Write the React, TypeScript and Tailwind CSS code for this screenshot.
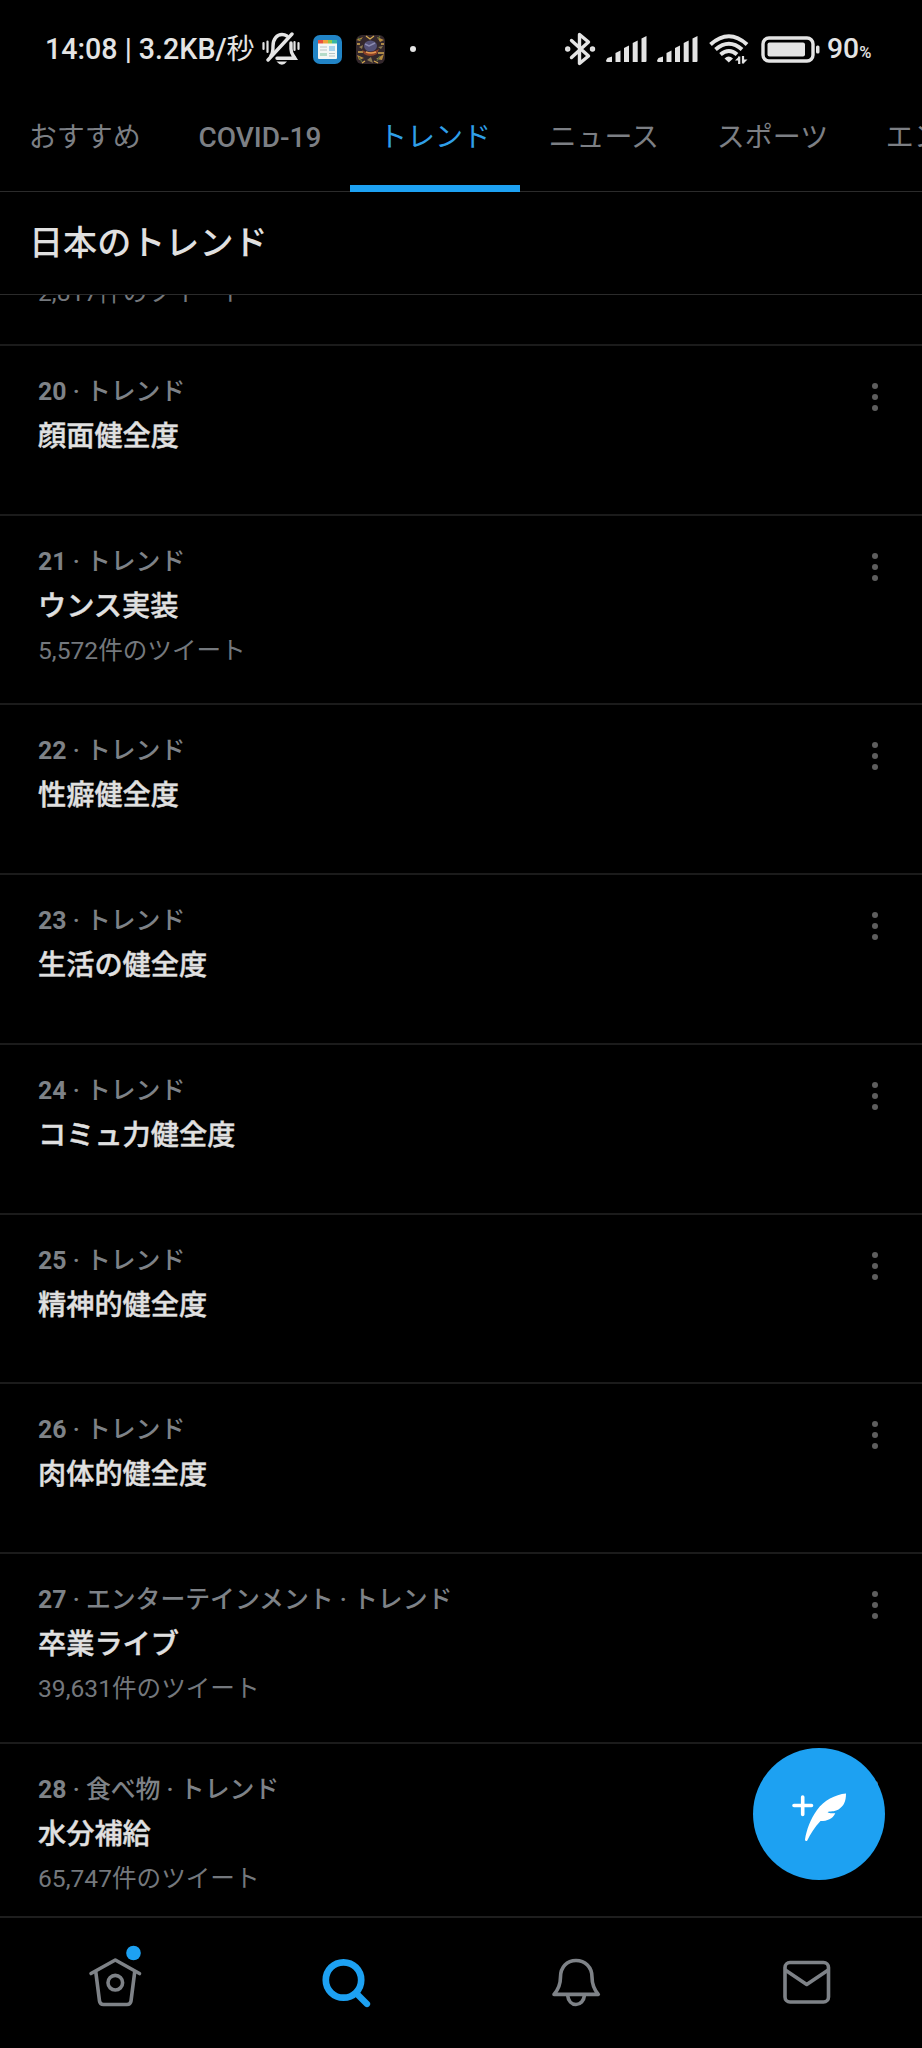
import React from "react";

const tabs = ["おすすめ", "COVID-19", "トレンド", "ニュース", "スポーツ", "エンターテインメント"];

const trends = [
  { rank: 20, category: "トレンド", title: "顔面健全度" },
  { rank: 21, category: "トレンド", title: "ウンス実装", count: "5,572" },
  { rank: 22, category: "トレンド", title: "性癖健全度" },
  { rank: 23, category: "トレンド", title: "生活の健全度" },
  { rank: 24, category: "トレンド", title: "コミュ力健全度" },
  { rank: 25, category: "トレンド", title: "精神的健全度" },
  { rank: 26, category: "トレンド", title: "肉体的健全度" },
  { rank: 27, category: "エンターテインメント · トレンド", title: "卒業ライブ", count: "39,631" },
  { rank: 28, category: "食べ物 · トレンド", title: "水分補給", count: "65,747" },
];

const Signal = () => (
  <svg className="h-[27px] w-[41px] shrink-0" viewBox="0 0 41 27" fill="#e4e4e4">
    <path d="M0 24.500L1.500 22L6 20.500V26H1.500Q0 26 0 24.500Z" />
    <path d="M9.500 17L14.500 14.500V26H9.500Z" />
    <path d="M18 12L23 9.500V26H18Z" />
    <path d="M26.700 7L31.700 4.500V26H26.700Z" />
    <path d="M35.500 2.500L40.500 0V25Q40.500 26 39.500 26H35.500Z" />
  </svg>
);

const StatusBar = () => (
  <div className="flex h-[98px] shrink-0 items-center text-[#e4e4e4]">
    <div className="ml-[45px] w-[217px] pt-px whitespace-nowrap text-[28.600px] font-medium">
      14:08 | 3.2KB/<span className="text-[28px] font-normal">秒</span>
    </div>
    {/* muted bell */}
    <svg className="h-[34px] w-[38px] shrink-0" viewBox="0 0 38 34" fill="none" stroke="#e4e4e4" strokeWidth="3.400" strokeLinecap="round">
      <path d="M9 23.500C11 21.500 11 19 11 14C11 7 15 2.500 20 2.500C22 2.500 23.500 3 25 4" />
      <path d="M29 11V17C29 22 31 23 33 26.300H15" />
      <path d="M30 2L6 28" />
      <path d="M1.500 11V17M5.500 9.500V20M32.500 10V18M36.500 11V17" strokeWidth="2.200" />
      <path d="M14.500 29.500H25Q20 36 14.500 29.500Z" fill="#e4e4e4" stroke="none" />
    </svg>
    <svg className="ml-[13px] h-[29px] w-[29px] shrink-0" viewBox="0 0 29 29">
      <rect width="29" height="29" rx="7" fill="#2184c6" />
      <rect x="5" y="5" width="19" height="19" rx="1" fill="#f4f7f5" />
      <path d="M5 5H10V8.500H5Z" fill="#e8503c" />
      <path d="M10 5H15V8.500H10Z" fill="#f0a13a" />
      <path d="M15 5H19V8.500H15Z" fill="#8fc84a" />
      <path d="M19 5H24V8.500H19Z" fill="#35b6a4" />
      <path d="M7 12H14M7 15H14M16 18.500H22M16 21H22" stroke="#b9c4c4" />
      <rect x="16" y="11" width="6" height="5" fill="#a7d3ec" />
      <rect x="7" y="18" width="7" height="3" fill="#b5dcc8" />
    </svg>
    <svg className="ml-[14px] h-[29px] w-[29px] shrink-0" viewBox="0 0 29 29">
      <defs>
        <clipPath id="game">
          <rect width="29" height="29" rx="6" />
        </clipPath>
      </defs>
      <g clipPath="url(#game)">
        <rect width="29" height="29" fill="#33272c" />
        <path d="M0 5L7 2L4 6ZM21 2L28 5L24 7ZM1 20L8 23L3 25ZM20 24L28 19L26 25Z" fill="#b58a3c" />
        <path d="M3 12L7 10L6 14ZM22 12L27 11L25 14ZM11 25L15 22L17 28Z" fill="#8b7a50" />
        <path d="M10 1L14 4L18 1M2 17H7M22 18H28M9 26L6 28M18 26L22 28M1 9H4M25 9H28" stroke="#d4a950" strokeWidth="1.300" fill="none" />
        <path d="M2 3L5 5M24 1L22 4M3 22L6 27M24 21L21 26" stroke="#5b6b3c" strokeWidth="1.300" />
        <ellipse cx="14.500" cy="11" rx="6.500" ry="5.500" fill="#545177" />
        <path d="M9 9L13 11L19 8" stroke="#8b8ab0" strokeWidth="1.500" fill="none" />
        <path d="M6 15Q14 20 23 14L21 19Q14 23 8 19Z" fill="#8f4328" />
        <path d="M10 17Q15 19 20 17" stroke="#e89a52" strokeWidth="1.500" fill="none" />
      </g>
    </svg>
    <span className="ml-[25px] h-[6px] w-[6px] rounded-full bg-[#e4e4e4]" />

    <div className="ml-[149px] flex items-center">
      <svg className="h-[34px] w-[31px] shrink-0" viewBox="0 0 31 34" fill="none" stroke="#e4e4e4" strokeWidth="3.400" strokeLinejoin="round" strokeLinecap="round">
        <path d="M6.500 8.500L23.500 24L14.500 31.500V2.500L23.500 10L6.500 25.500" />
        <circle cx="2.700" cy="17" r="1" fill="#e4e4e4" />
        <circle cx="27.500" cy="17" r="1" fill="#e4e4e4" />
      </svg>
      <div className="ml-[10px] flex gap-[10px]">
        <Signal />
        <Signal />
      </div>
      <svg className="ml-[11px] h-[30px] w-[40px] shrink-0" viewBox="0 0 40 30" fill="none" stroke="#e4e4e4" strokeWidth="4">
        <path d="M1.500 10.500Q20 -6 38 10.500" />
        <path d="M6.500 15.500Q20 4 33 15.500" />
        <path d="M11.500 20.500Q20 13.500 28 20.500" />
        <path d="M15.500 24.500Q19.500 20.500 24 24.500L19.800 28.500Z" fill="#e4e4e4" stroke="none" />
        <path d="M30.200 22.500V30M34 22V29.500" strokeWidth="2.200" />
        <path d="M26 26.500H30V22.500ZM34.500 29.500V25.500H38.500Z" fill="#e4e4e4" stroke="none" />
      </svg>
      <svg className="ml-[12px] h-[27px] w-[60px] shrink-0" viewBox="0 0 60 27" fill="#e4e4e4">
        <rect x="2" y="2" width="50" height="23" rx="6" fill="none" stroke="#e4e4e4" strokeWidth="3.400" />
        <rect x="6.500" y="6.500" width="37.500" height="14" rx="2" />
        <rect x="55" y="9.500" width="3.500" height="8" rx="1.500" />
      </svg>
      <div className="ml-[6px] flex items-baseline pt-[2px] font-medium">
        <span className="text-[28.300px] leading-none">90</span>
        <span className="text-[16.500px]">%</span>
      </div>
    </div>
  </div>
);

const Tabs = () => (
  <div className="flex h-[94px] shrink-0 border-b border-[#2b2b2b]">
    {tabs.map((tab) => {
      const active = tab === "トレンド";
      return (
        <button
          key={tab}
          className={`relative shrink-0 px-[28.800px] pb-[13px] text-[28px] whitespace-nowrap ${
            active ? "text-[#2f9fe8]" : "text-[#7c7f84]"
          } ${tab === "COVID-19" ? "font-medium" : "font-normal"}`}
        >
          {tab}
          {active && <span className="absolute inset-x-0 -bottom-px h-[7px] bg-[#1da1f2]" />}
        </button>
      );
    })}
  </div>
);

const TrendRow = ({ trend }) => (
  <div
    className={`flex shrink-0 justify-between border-b-2 border-[#1b1b1b] pt-[23px] pr-[44px] pl-[38px] ${
      trend.count ? "h-[189.500px]" : "h-[169.800px]"
    }`}
  >
    <div className="flex flex-col whitespace-nowrap">
      <p className="h-[45px] text-[24.850px] leading-[45px] font-medium text-[#7e8287]">
        <span className="font-bold">{trend.rank}</span> · {trend.category}
      </p>
      <h3 className="h-[45px] text-[28.200px] leading-[45px] font-medium text-[#e0e0e0] [-webkit-text-stroke:0.4px_#e0e0e0]">
        {trend.title}
      </h3>
      {trend.count && (
        <p className="h-[45px] text-[24.600px] leading-[44px] font-normal text-[#74787d]">{trend.count}件のツイート</p>
      )}
    </div>
    <div className="flex flex-col gap-[5px] pt-[14px]">
      <span className="h-[6px] w-[6px] rounded-full bg-[#5e5e5e]" />
      <span className="h-[6px] w-[6px] rounded-full bg-[#5e5e5e]" />
      <span className="h-[6px] w-[6px] rounded-full bg-[#5e5e5e]" />
    </div>
  </div>
);

const BottomNav = () => (
  <nav className="grid h-[132px] shrink-0 grid-cols-4 place-items-center border-t-2 border-[#1e1e1e] bg-black">
    <svg className="h-[60px] w-[60px] overflow-visible" viewBox="0 0 60 60" fill="none" stroke="#7e8287" strokeWidth="3.600" strokeLinecap="round" strokeLinejoin="round">
      <path d="M6 20.500L30.300 7L54.500 20.500" />
      <path d="M10.800 19L14.500 48Q15 51.500 18.500 51.500H42Q45.500 51.500 46 48L49.700 19" />
      <circle cx="30.300" cy="29.700" r="7.300" />
      <circle cx="48.500" cy="0" r="7.300" fill="#1da1f2" stroke="none" />
    </svg>
    <svg className="h-[60px] w-[60px]" viewBox="0 0 60 60" fill="none" stroke="#1da1f2" strokeLinecap="round">
      <circle cx="27.500" cy="27" r="17.700" strokeWidth="6.700" />
      <path d="M41 41L51 51" strokeWidth="6.300" />
    </svg>
    <svg className="h-[60px] w-[60px]" viewBox="0 0 60 60" fill="none" stroke="#7e8287" strokeWidth="3.600" strokeLinecap="round" strokeLinejoin="round">
      <path d="M8 41.400Q14.500 34 14.500 24C14.500 14 21 7.500 30 7.500S46 14 46 24Q46 34 52.300 41.400Z" />
      <path d="M21.700 42.500C22.200 48 25.700 51.500 30 51.500S37.900 48 38.400 42.500" />
    </svg>
    <svg className="h-[60px] w-[60px]" viewBox="0 0 60 60" fill="none" stroke="#7e8287" strokeWidth="3.600" strokeLinecap="round" strokeLinejoin="round">
      <rect x="8" y="9.500" width="43.500" height="39.500" rx="5" />
      <path d="M9 17.500L29.700 31.500L50.500 17.500" />
    </svg>
  </nav>
);

const App = () => {
  return (
    <div
      lang="ja"
      className="relative flex h-[2048px] w-[922px] flex-col overflow-hidden bg-black font-['Roboto','Noto_Sans_CJK_JP',sans-serif]"
    >
      <StatusBar />
      <Tabs />
      <header className="flex h-[103px] shrink-0 items-center border-b border-[#2b2b2b] pt-[2px] pl-[29px]">
        <h2 className="text-[34.100px] font-medium text-[#e0e0e0]">日本のトレンド</h2>
      </header>
      <main className="flex min-h-0 flex-1 flex-col overflow-hidden">
        {/* row scrolled half under the header */}
        <div className="flex h-[51px] shrink-0 flex-col justify-end overflow-hidden border-b-2 border-[#1b1b1b] pb-[29px] pl-[38px]">
          <p className="h-[45px] text-[24.600px] leading-[45px] text-[#74787d]">2,817件のツイート</p>
        </div>
        {trends.map((trend) => (
          <TrendRow key={trend.rank} trend={trend} />
        ))}
      </main>
      <BottomNav />
      <button className="absolute right-[37.500px] bottom-[168.500px] h-[132px] w-[132px] rounded-full bg-[#1da1f2]">
        <svg className="h-full w-full" viewBox="0 0 132 132" fill="#ffffff">
          <path d="M49.700 49V66.500M41 57.500H58.500" stroke="#ffffff" strokeWidth="3.600" strokeLinecap="round" />
          <path d="M93 45.500C93 53 91 58 85.500 61.500C81 64 77 63 74.500 64C77 66 80 65 82.300 65.200C79.500 71 74.500 73 67.500 73C61.500 79 57.500 86 54 93Q52 93.500 52 91.500C53.500 82 57.500 71 64 62C71 52.500 82 46.500 93 45.500Z" />
        </svg>
      </button>
    </div>
  );
};

export default App;
